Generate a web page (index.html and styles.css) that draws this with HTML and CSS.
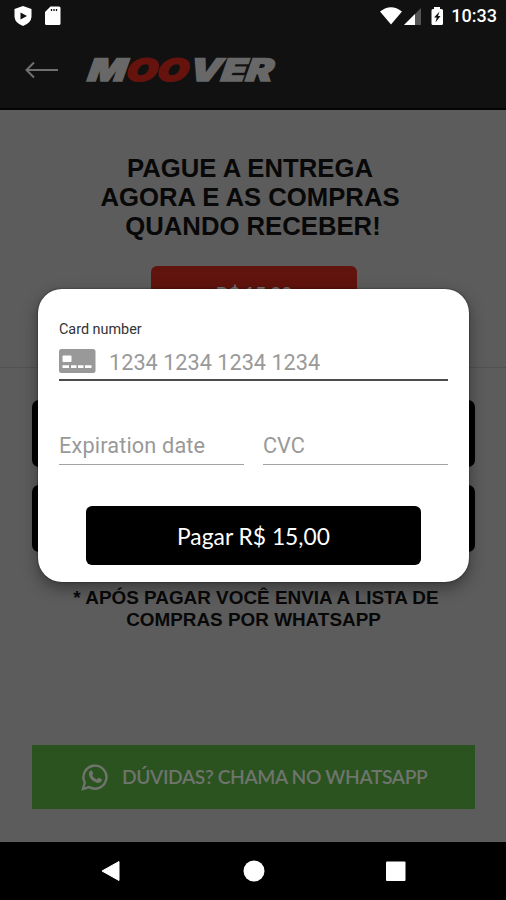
FILE: index.html
```html
<!DOCTYPE html>
<html lang="pt-BR">
<head>
    <meta charset="UTF-8">
    <meta name="viewport" content="width=device-width, initial-scale=1.0">
    <title>Moover - Pagamento</title>
    <link rel="stylesheet" href="styles.css">
</head>
<body>
    <div class="screen">
        <div class="status-bar">
            <svg class="status-left" width="54" height="24" viewBox="0 0 54 24" fill="#fff">
                <path d="M9 1 L17.500 4 V12 Q17 18 9 21 Q1 18 .5 12 V4 Z M6.500 7.500 V14.500 L13 11 Z" fill-rule="evenodd"/>
                <path d="M36.500 1.500 H45 Q46.500 1.500 46.500 3 V18.500 Q46.500 20 45 20 H32.500 Q31 20 31 18.500 V7 Z"/>
                <path d="M37.500 4 V6 M40 4 V6 M42.500 4 V6" stroke="#111" stroke-width="1.300"/>
            </svg>
            <svg class="status-icons" width="66" height="24" viewBox="0 0 66 24">
                <path d="M0 6.500 Q11 -2 22 6.500 L11 19.500 Z" fill="#fff"/>
                <path d="M41 3 V20 H24 Z" fill="#555"/>
                <path d="M35 9 V20 H24 Z" fill="#fff"/>
                <path d="M54 2 H60 V4 H61.500 Q63 4 63 5.500 V18.500 Q63 20 61.500 20 H53 Q51.500 20 51.500 18.500 V5.500 Q51.500 4 53 4 H54 Z" fill="#fff"/>
                <path d="M59.500 6.500 L54 12.500 H56.700 L55.500 17.500 L60.500 11 H58 Z" fill="#111"/>
            </svg>
            <span class="clock">10:33</span>
        </div>

        <div class="header">
            <svg class="back" width="34" height="18" viewBox="0 0 34 18" fill="none" stroke="#707070" stroke-width="2">
                <path d="M9 1.500 L1.500 9 L9 16.500 M1.500 9 H33"/>
            </svg>
            <svg class="logo" width="200" height="48" viewBox="0 0 200 48">
                <text transform="translate(3 35) skewX(-8)" textLength="185" lengthAdjust="spacingAndGlyphs">M<tspan class="logo-red">OO</tspan><tspan dx="1">VER</tspan></text>
            </svg>
        </div>

        <div class="content">
            <h1>PAGUE A ENTREGA<br>AGORA E AS COMPRAS<br><span class="last-line">QUANDO RECEBER!</span></h1>
            <div class="price">R$ 15,00</div>
            <div class="options">
                <div class="option"></div>
                <div class="option"></div>
            </div>
            <p class="note">* APÓS PAGAR VOCÊ ENVIA A LISTA DE<br><span>COMPRAS POR WHATSAPP</span></p>
            <div class="whatsapp">
                <svg width="28" height="28" viewBox="0 0 28 28">
                    <path d="M2 26 L3.800 19.500 A11.500 11.500 0 1 1 8.200 24.100 Z" fill="none" stroke="#6f746d" stroke-width="2.400"/>
                    <path d="M9.200 7.700 Q10.500 6.600 11.200 8.100 L12.200 10.500 Q12.400 11.200 11.200 12.500 Q13 15.500 15.800 16.500 L17.200 15 Q17.700 14.600 18.500 15 L20.600 16 Q21.300 16.500 20.700 18 Q19.300 20.300 16.700 20 Q9.500 18 7.900 11.700 Q7.500 9.300 9.200 7.700 Z" fill="#6f746d"/>
                </svg>
                <span class="whatsapp-text">DÚVIDAS? CHAMA NO WHATSAPP</span>
            </div>
        </div>

        <div class="nav-bar">
            <svg width="22" height="22" viewBox="0 0 22 22"><path d="M2 11 L19 1.500 V20.500 Z" fill="#fff" stroke="#fff" stroke-linejoin="round"/></svg>
            <svg width="22" height="22" viewBox="0 0 22 22"><circle cx="11" cy="11" r="10.500" fill="#fff"/></svg>
            <svg width="22" height="22" viewBox="0 0 22 22"><rect x="1" y="1.500" width="19.500" height="19.500" rx="1" fill="#fff"/></svg>
        </div>

        <div class="dialog">
            <div class="label">Card number</div>
            <div class="field card-field">
                <svg width="37" height="24" viewBox="0 0 37 24">
                    <rect width="36.500" height="24" rx="2.500" fill="#999"/>
                    <rect x="3.500" y="6.500" width="9" height="6.500" rx="1" fill="#fff"/>
                    <path d="M3.500 17.700 H10 M12 17.700 H17.500 M19 17.700 H24.500 M26 17.700 H32.500" stroke="#fff" stroke-width="2.700"/>
                </svg>
                <span class="number">1234 1234 1234 1234</span>
            </div>
            <div class="row">
                <div class="field small"><span class="expiration">Expiration date</span></div>
                <div class="field small"><span>CVC</span></div>
            </div>
            <button class="pay">Pagar R$ 15,00</button>
        </div>
    </div>
</body>
</html>
```
FILE: styles.css
```css
* {
    box-sizing: border-box;
}

body {
    margin: 0;
    background-color: #5c5c5c;
}

.screen {
    position: relative;
    display: flex;
    flex-direction: column;
    width: 506px;
    height: 900px;
    overflow: hidden;
    background-color: #5c5c5c;
    white-space: nowrap;
}

.status-bar {
    display: flex;
    align-items: flex-start;
    height: 32px;
    padding: 5px 9px 0 14px;
    background-color: #111;
}

.status-icons {
    margin-left: auto;
}

.clock {
    margin-left: 5px;
    font: 500 18px/22px Roboto, sans-serif;
    color: #fff;
}

.header {
    display: flex;
    align-items: center;
    gap: 25px;
    height: 78px;
    padding: 0 0 0 25px;
    background-color: #111;
    border-bottom: 2px solid #040404;
}

.logo {
    font: italic 900 31px Inter, sans-serif;
    fill: #686868;
    stroke: #686868;
    stroke-width: 1.5px;
}

.logo-red {
    fill: #66130d;
    stroke: #66130d;
}

.content {
    display: flex;
    flex-direction: column;
    height: 732px;
    padding: 44px 32px 0;
    font-family: "Liberation Sans", Arial, sans-serif;
    color: #080808;
}

h1 {
    margin: 0 0 0 -6px;
    font-size: 25.7px;
    line-height: 29px;
    text-align: center;
}

.last-line {
    padding-left: 6px;
}

.price {
    width: 206px;
    height: 59px;
    margin: 25px auto 0 119px;
    padding-top: 16px;
    border-radius: 6px;
    background-color: #61130d;
    color: #777;
    font: 700 20px/24px Lato, sans-serif;
    letter-spacing: -0.5px;
    text-align: center;
}

.options {
    display: flex;
    flex-direction: column;
    gap: 18px;
    margin: 42px -32px 0;
    padding: 32px 31px 0 32px;
    border-top: 1px solid #525252;
}

.option {
    height: 67px;
    border-radius: 7px;
    background-color: #000;
}

.note {
    margin: 35px 0 0 6px;
    font-size: 18.9px;
    font-weight: bold;
    line-height: 21.5px;
    text-align: center;
}

.note span {
    padding-right: 5px;
}

.whatsapp {
    display: flex;
    align-items: center;
    width: 443px;
    height: 64px;
    margin-top: 115px;
    padding-left: 49px;
    background-color: #2a531f;
    color: #6f746d;
}

.whatsapp-text {
    margin-left: 13px;
    font: 600 19.3px/24px Lato, sans-serif;
    letter-spacing: -0.4px;
}

.nav-bar {
    display: flex;
    align-items: center;
    justify-content: space-between;
    height: 58px;
    padding: 0 99px 0 100px;
    background-color: #000;
}

/* payment dialog */
.dialog {
    position: absolute;
    top: 289px;
    left: 38px;
    width: 431px;
    height: 293px;
    padding: 31px 21px 0;
    border-radius: 24px;
    background-color: #fff;
    box-shadow: 0 6px 16px rgba(0, 0, 0, 0.4), 0 0 2px rgba(0, 0, 0, 0.6);
    font-family: Roboto, sans-serif;
}

.label {
    font-size: 14.4px;
    line-height: 20px;
    color: #333;
}

.field {
    display: flex;
    align-items: center;
    color: #999;
    font-size: 21.7px;
}

.card-field {
    height: 41px;
    padding-top: 2px;
    border-bottom: 2px solid #4c4c4c;
}

.number {
    margin: 3px 0 0 13px;
}

.expiration {
    letter-spacing: 0.15px;
}

.row {
    display: flex;
    gap: 19px;
    margin-top: 46px;
}

.small {
    flex: 1;
    height: 38px;
    border-bottom: 1.5px solid #a2a2a2;
}

.pay {
    display: block;
    width: 335px;
    height: 59px;
    margin: 41px 0 0 27px;
    padding: 0;
    border: none;
    border-radius: 6px;
    background-color: #000;
    color: #fff;
    font: 400 22.8px Lato, sans-serif;
}
```
